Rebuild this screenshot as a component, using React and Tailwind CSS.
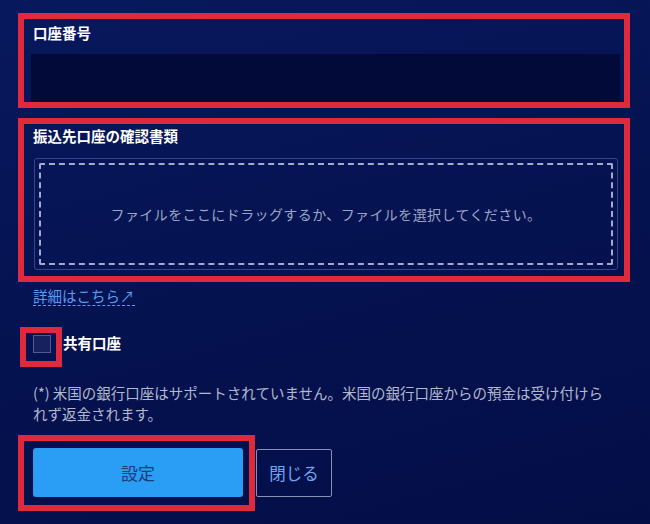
import React from "react";

export default function App() {
  return (
    <div className="w-[650px] h-[524px] overflow-hidden bg-[linear-gradient(165deg,#07185c_0%,#051352_45%,#030e46_100%)] pl-[18px] pt-[13px] font-['Noto_Sans_CJK_JP','Noto_Sans',sans-serif] text-[14.5px]">
      {/* 口座番号 */}
      <div className="w-[612px] h-[95px] border-[6px] border-[#df2a3b] px-[9px] pt-[4px]">
        <div className="leading-[20px] font-bold text-white">口座番号</div>
        <div className="mt-[11px] -ml-[2px] w-[589px] h-[48px] bg-[#020a3a]"></div>
      </div>

      {/* 振込先口座の確認書類 */}
      <div className="mt-[10px] w-[612px] h-[164px] border-[6px] border-[#df2a3b] px-[9px] pt-[2px]">
        <div className="leading-[20px] font-bold text-white">振込先口座の確認書類</div>
        <div className="mt-[12px] ml-[1px] w-[584px] h-[112px] border border-[#34448a] rounded-[3px] p-[4px]">
          <div className="w-full h-full border-2 border-dashed border-[#a3aacb] rounded-[2px] flex items-center justify-center">
            <span className="text-[14px] tracking-[0.4px] text-[#9ea5c4]">
              ファイルをここにドラッグするか、ファイルを選択してください。
            </span>
          </div>
        </div>
      </div>

      {/* link */}
      <div className="mt-[5px] pl-[15px] flex">
        <a className="block leading-[18px] text-[#5b9cf0] border-b border-dashed border-[#5b9cf0]">
          詳細はこちら↗
        </a>
      </div>

      {/* checkbox */}
      <div className="mt-[21px] ml-[2px] flex items-start">
        <div className="w-[42px] h-[40px] border-[6px] border-[#df2a3b] pl-[7px] pt-[2px]">
          <div className="w-[18px] h-[18px] border border-[#4f5a96] bg-[#16215e]"></div>
        </div>
        <span className="ml-[1px] mt-[6px] font-bold text-white leading-[20px]">共有口座</span>
      </div>

      {/* note */}
      <p className="mt-[15px] ml-[15px] w-[580px] leading-[21px] text-[#b3b8cd]">
        (*) 米国の銀行口座はサポートされていません。米国の銀行口座からの預金は受け付けられず返金されます。
      </p>

      {/* buttons */}
      <div className="mt-[11px] flex items-center">
        <div className="w-[237px] h-[76px] border-[6px] border-[#df2a3b] pl-[9px] pt-[7px]">
          <button className="w-[210px] h-[49px] rounded-[3px] bg-[#2a9df4] text-[17px] text-[#1d3a78]">
            設定
          </button>
        </div>
        <button className="ml-[1px] w-[76px] h-[48px] rounded-[2px] border border-[#8790b5] text-[16.5px] text-[#6fa6f0]">
          閉じる
        </button>
      </div>
    </div>
  );
}
